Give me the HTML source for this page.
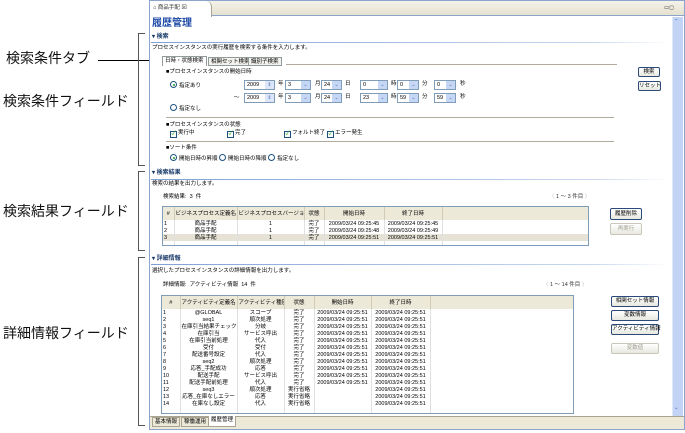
<!DOCTYPE html>
<html><head><meta charset="utf-8"><style>
*{margin:0;padding:0;box-sizing:border-box}
body{width:685px;height:433px;background:#fff;position:relative;overflow:hidden;font-family:"Liberation Sans","Noto Sans CJK JP",sans-serif;color:#000}
.a{position:absolute;white-space:nowrap}
.t{font-size:5.5px;line-height:7px}
.lab{font-size:14px;line-height:16px;color:#111}
.box{position:absolute;border:1px solid #7f9db9;background:#fff;font-size:5.5px;line-height:8px;padding-left:2px}
.dd{position:absolute;right:0;top:0;bottom:0;width:9px;background:#c6d6f5;color:#4a6db5;font-size:5px;text-align:center;line-height:8px}
.btn{position:absolute;border:1px solid #2a4a7a;border-radius:2px;background:linear-gradient(#fff,#e8e8e0);font-size:5.5px;line-height:9px;text-align:center;white-space:nowrap}
.btn.dis{border-color:#c9c7ba;color:#a0a090}
.sec{position:absolute;font-size:6px;line-height:7px;font-weight:bold;color:#1a3a6a;white-space:nowrap}
.hl{position:absolute;height:1px;background:linear-gradient(90deg,#7fa0d5,#c8d8f0 85%,#fff)}
.gl{position:absolute;height:1px;background:#b0ab9c}
table{border-collapse:collapse;font-size:5.5px;line-height:6px;table-layout:fixed}
td,th{padding:0 1px;text-align:center;white-space:nowrap;overflow:hidden;font-weight:normal;border-right:1px solid #e0e0e0}
td{height:7px}
th{background:#ece9d8;height:13px;border-right:1px solid #d0ccb8}
.tbl{position:absolute;border:1px solid #7f9db9;background:#fff;overflow:hidden}
.chk{display:inline-block;width:7px;height:7px;border:1px solid #1c5180;vertical-align:-1px;margin-right:1px;font-size:6px;line-height:5px;color:#21a121;text-align:center}
.rad{display:inline-block;width:7px;height:7px;border:1px solid #1c5180;border-radius:50%;vertical-align:-1px;margin-right:2px;position:relative}
.rad.on:after{content:"";position:absolute;left:1.5px;top:1.5px;width:2px;height:2px;border-radius:50%;background:#21a121}
</style></head><body>
<div class="a lab" style="left:6px;top:50px">検索条件タブ</div>
<div class="a" style="left:98px;top:60px;width:66px;height:1px;background:#000"></div>
<div class="a" style="left:160px;top:57px;width:7px;height:7px;border-radius:50%;background:#000"></div>
<div class="a lab" style="left:3px;top:93px">検索条件フィールド</div>
<div class="a lab" style="left:3px;top:203px">検索結果フィールド</div>
<div class="a lab" style="left:3px;top:325px">詳細情報フィールド</div>
<div class="a" style="left:138px;top:33px;width:7px;height:133px;border:1px solid #555;border-right:none"></div>
<div class="a" style="left:138px;top:171px;width:7px;height:80px;border:1px solid #555;border-right:none"></div>
<div class="a" style="left:138px;top:257px;width:7px;height:169px;border:1px solid #555;border-right:none"></div>

<div class="a" style="left:149px;top:0;width:536px;height:430px;border:1px solid #8aa4cc;background:#fff"></div>
<div class="a" style="left:150px;top:1px;width:534px;height:15px;background:linear-gradient(#f4f2ea,#e6e1cf);border-bottom:1px solid #8aa4cc"></div>
<div class="a" style="left:150px;top:1px;width:62px;height:16px;background:#fff;border-right:1px solid #a8a490;border-radius:0 6px 0 0"></div>
<div class="a t" style="left:153px;top:5px;color:#333">⌂ 商品手配 ⊠</div>
<div class="a t" style="left:664px;top:5px;color:#333">▭◻</div>
<div class="a" style="left:672px;top:17px;width:11px;height:400px;background:#c2d3f5;border-left:1px solid #dfe8f8"></div>
<div class="a t" style="left:674px;top:19px;color:#4a6db5">⌃</div>
<div class="a t" style="left:674px;top:405px;color:#4a6db5">⌄</div>

<div class="a" style="left:152px;top:18px;font-size:10px;font-weight:bold;color:#1f4aa8;line-height:12px">履歴管理</div>
<div class="hl" style="left:151px;top:42px;width:520px"></div>

<div class="sec" style="left:152px;top:34px">▾ 検索</div>
<div class="a t" style="left:152px;top:45px">プロセスインスタンスの実行履歴を検索する条件を入力します。</div>
<div class="a t" style="left:162px;top:56px;height:10px;border:1px solid #919b9c;border-bottom:none;background:#fff;padding:0 2px;line-height:9px">日時・状態検索</div>
<div class="a t" style="left:208px;top:57px;height:9px;border:1px solid #919b9c;background:#f3f2ec;padding:0 2px;line-height:8px">相関セット検索</div>
<div class="a t" style="left:248px;top:57px;height:9px;border:1px solid #919b9c;background:#f3f2ec;padding:0 2px;line-height:8px">識別子検索</div>
<div class="gl" style="left:286px;top:64px;width:331px"></div>
<div class="a t" style="left:166px;top:69px">■プロセスインスタンスの開始日時</div>
<div class="a t" style="left:170px;top:81px"><span class="rad on"></span>指定あり</div>
<div class="a t" style="left:170px;top:104px"><span class="rad"></span>指定なし</div>

<div class="box" style="left:244px;top:80px;width:31px;height:10px">2009<div class="dd" style="background:#dde6f8">⇕</div></div>
<div class="a t" style="left:278px;top:81px">年</div>
<div class="box" style="left:285px;top:80px;width:26px;height:10px">3<div class="dd">⌄</div></div>
<div class="a t" style="left:315px;top:81px">月</div>
<div class="box" style="left:321px;top:80px;width:21px;height:10px">24<div class="dd">⌄</div></div>
<div class="a t" style="left:345px;top:81px">日</div>
<div class="box" style="left:360px;top:80px;width:28px;height:10px">0<div class="dd">⌄</div></div>
<div class="a t" style="left:391px;top:81px">時</div>
<div class="box" style="left:397px;top:80px;width:22px;height:10px">0<div class="dd">⌄</div></div>
<div class="a t" style="left:422px;top:81px">分</div>
<div class="box" style="left:434px;top:80px;width:22px;height:10px">0<div class="dd">⌄</div></div>
<div class="a t" style="left:460px;top:81px">秒</div>

<div class="a t" style="left:234px;top:95px">～</div>
<div class="box" style="left:244px;top:93px;width:31px;height:10px">2009<div class="dd" style="background:#dde6f8">⇕</div></div>
<div class="a t" style="left:278px;top:94px">年</div>
<div class="box" style="left:285px;top:93px;width:26px;height:10px">3<div class="dd">⌄</div></div>
<div class="a t" style="left:315px;top:94px">月</div>
<div class="box" style="left:321px;top:93px;width:21px;height:10px">24<div class="dd">⌄</div></div>
<div class="a t" style="left:345px;top:94px">日</div>
<div class="box" style="left:360px;top:93px;width:28px;height:10px">23<div class="dd">⌄</div></div>
<div class="a t" style="left:391px;top:94px">時</div>
<div class="box" style="left:397px;top:93px;width:22px;height:10px">59<div class="dd">⌄</div></div>
<div class="a t" style="left:422px;top:94px">分</div>
<div class="box" style="left:434px;top:93px;width:22px;height:10px">59<div class="dd">⌄</div></div>
<div class="a t" style="left:460px;top:94px">秒</div>

<div class="gl" style="left:166px;top:117px;width:448px"></div>
<div class="a t" style="left:166px;top:122px">■プロセスインスタンスの状態</div>
<div class="a t" style="left:170px;top:130px"><span class="chk">✓</span>実行中</div>
<div class="a t" style="left:227px;top:130px"><span class="chk">✓</span>完了</div>
<div class="a t" style="left:284px;top:130px"><span class="chk">✓</span>フォルト終了</div>
<div class="a t" style="left:327px;top:130px"><span class="chk">✓</span>エラー発生</div>
<div class="gl" style="left:166px;top:141px;width:448px"></div>
<div class="a t" style="left:166px;top:145px">■ソート条件</div>
<div class="a t" style="left:170px;top:154px"><span class="rad on"></span>開始日時の昇順 <span class="rad"></span>開始日時の降順 <span class="rad"></span>指定なし</div>
<div class="btn" style="left:638px;top:67px;width:22px;height:10px;line-height:8px">検索</div>
<div class="btn" style="left:638px;top:81px;width:23px;height:10px;line-height:8px">リセット</div>

<div class="sec" style="left:152px;top:170px">▾ 検索結果</div>
<div class="hl" style="left:151px;top:179px;width:520px"></div>
<div class="a t" style="left:152px;top:181px">検索の結果を出力します。</div>
<div class="a t" style="left:163px;top:194px">検索結果:&nbsp; 3 &nbsp;件</div>
<div class="a t" style="left:549px;top:194px;color:#333"><span style="color:#bbb">〈</span> 1 ～ 3 件目 <span style="color:#bbb">〉</span></div>
<div class="tbl" style="left:162px;top:206px;width:427px;height:40px">
<table style="width:427px"><colgroup><col style="width:11px"><col style="width:63px"><col style="width:67px"><col style="width:20px"><col style="width:60px"><col style="width:58px"><col></colgroup>
<tr><th>#</th><th>ビジネスプロセス定義名</th><th>ビジネスプロセスバージョン</th><th>状態</th><th>開始日時</th><th>終了日時</th><th></th></tr>
<tr><td style="text-align:left">1</td><td>商品手配</td><td>1</td><td>完了</td><td>2009/03/24 09:25:45</td><td>2009/03/24 09:25:45</td><td></td></tr>
<tr><td style="text-align:left">2</td><td>商品手配</td><td>1</td><td>完了</td><td>2009/03/24 09:25:48</td><td>2009/03/24 09:25:49</td><td></td></tr>
<tr style="background:#e6e3d6"><td style="text-align:left">3</td><td>商品手配</td><td>1</td><td>完了</td><td>2009/03/24 09:25:51</td><td>2009/03/24 09:25:51</td><td></td></tr>
<tr><td style="height:8px"></td><td></td><td></td><td></td><td></td><td></td><td></td></tr></table></div>
<div class="btn" style="left:610px;top:208px;width:32px;height:12px;line-height:10px">履歴削除</div>
<div class="btn dis" style="left:610px;top:223px;width:32px;height:12px;line-height:10px">再実行</div>

<div class="sec" style="left:152px;top:256px">▾ 詳細情報</div>
<div class="hl" style="left:151px;top:264px;width:520px"></div>
<div class="a t" style="left:152px;top:268px">選択したプロセスインスタンスの詳細情報を出力します。</div>
<div class="a t" style="left:163px;top:282px">詳細情報:&nbsp; アクティビティ情報&nbsp; 14 &nbsp;件</div>
<div class="a t" style="left:543px;top:282px;color:#333"><span style="color:#bbb">〈</span> 1 ～ 14 件目 <span style="color:#bbb">〉</span></div>
<div class="tbl" style="left:161px;top:295px;width:413px;height:119px">
<table style="width:413px"><colgroup><col style="width:18px"><col style="width:57px"><col style="width:47px"><col style="width:30px"><col style="width:57px"><col style="width:59px"><col></colgroup>
<tr><th>#</th><th>アクティビティ定義名</th><th>アクティビティ種別</th><th>状態</th><th>開始日時</th><th>終了日時</th><th></th></tr>
<tr><td style="text-align:left">1</td><td>@GLOBAL</td><td>スコープ</td><td>完了</td><td>2009/03/24 09:25:51</td><td>2009/03/24 09:25:51</td><td></td></tr>
<tr><td style="text-align:left">2</td><td>seq1</td><td>順次処理</td><td>完了</td><td>2009/03/24 09:25:51</td><td>2009/03/24 09:25:51</td><td></td></tr>
<tr><td style="text-align:left">3</td><td>在庫引当結果チェック</td><td>分岐</td><td>完了</td><td>2009/03/24 09:25:51</td><td>2009/03/24 09:25:51</td><td></td></tr>
<tr><td style="text-align:left">4</td><td>在庫引当</td><td>サービス呼出</td><td>完了</td><td>2009/03/24 09:25:51</td><td>2009/03/24 09:25:51</td><td></td></tr>
<tr><td style="text-align:left">5</td><td>在庫引当前処理</td><td>代入</td><td>完了</td><td>2009/03/24 09:25:51</td><td>2009/03/24 09:25:51</td><td></td></tr>
<tr><td style="text-align:left">6</td><td>受付</td><td>受付</td><td>完了</td><td>2009/03/24 09:25:51</td><td>2009/03/24 09:25:51</td><td></td></tr>
<tr><td style="text-align:left">7</td><td>配送番号設定</td><td>代入</td><td>完了</td><td>2009/03/24 09:25:51</td><td>2009/03/24 09:25:51</td><td></td></tr>
<tr><td style="text-align:left">8</td><td>seq2</td><td>順次処理</td><td>完了</td><td>2009/03/24 09:25:51</td><td>2009/03/24 09:25:51</td><td></td></tr>
<tr><td style="text-align:left">9</td><td>応答_手配成功</td><td>応答</td><td>完了</td><td>2009/03/24 09:25:51</td><td>2009/03/24 09:25:51</td><td></td></tr>
<tr><td style="text-align:left">10</td><td>配送手配</td><td>サービス呼出</td><td>完了</td><td>2009/03/24 09:25:51</td><td>2009/03/24 09:25:51</td><td></td></tr>
<tr><td style="text-align:left">11</td><td>配送手配前処理</td><td>代入</td><td>完了</td><td>2009/03/24 09:25:51</td><td>2009/03/24 09:25:51</td><td></td></tr>
<tr><td style="text-align:left">12</td><td>seq3</td><td>順次処理</td><td>実行省略</td><td></td><td>2009/03/24 09:25:51</td><td></td></tr>
<tr><td style="text-align:left">13</td><td>応答_在庫なしエラー</td><td>応答</td><td>実行省略</td><td></td><td>2009/03/24 09:25:51</td><td></td></tr>
<tr><td style="text-align:left">14</td><td>在庫なし設定</td><td>代入</td><td>実行省略</td><td></td><td>2009/03/24 09:25:51</td><td></td></tr>
<tr><td style="height:10px"></td><td></td><td></td><td></td><td></td><td></td><td></td></tr></table></div>
<div class="btn" style="left:611px;top:296px;width:48px;height:11px;line-height:9px">相関セット情報</div>
<div class="btn" style="left:611px;top:310px;width:48px;height:11px;line-height:9px">変数情報</div>
<div class="btn" style="left:611px;top:324px;width:48px;height:11px;line-height:9px">アクティビティ情報</div>
<div class="btn dis" style="left:611px;top:343px;width:48px;height:11px;line-height:9px">変数値</div>

<div class="a" style="left:150px;top:416px;width:534px;height:13px;background:#ece9d8;border-top:1px solid #a8a490"></div>
<div class="a t" style="left:152px;top:417px;height:10px;border:1px solid #a8a490;padding:0 2px;line-height:8px">基本情報</div>
<div class="a t" style="left:181px;top:417px;height:10px;border:1px solid #a8a490;padding:0 2px;line-height:8px">稼働運用</div>
<div class="a t" style="left:208px;top:416px;height:11px;border:1px solid #a8a490;border-top:none;background:#fff;padding:0 2px;line-height:9px">履歴管理</div>
</body></html>
